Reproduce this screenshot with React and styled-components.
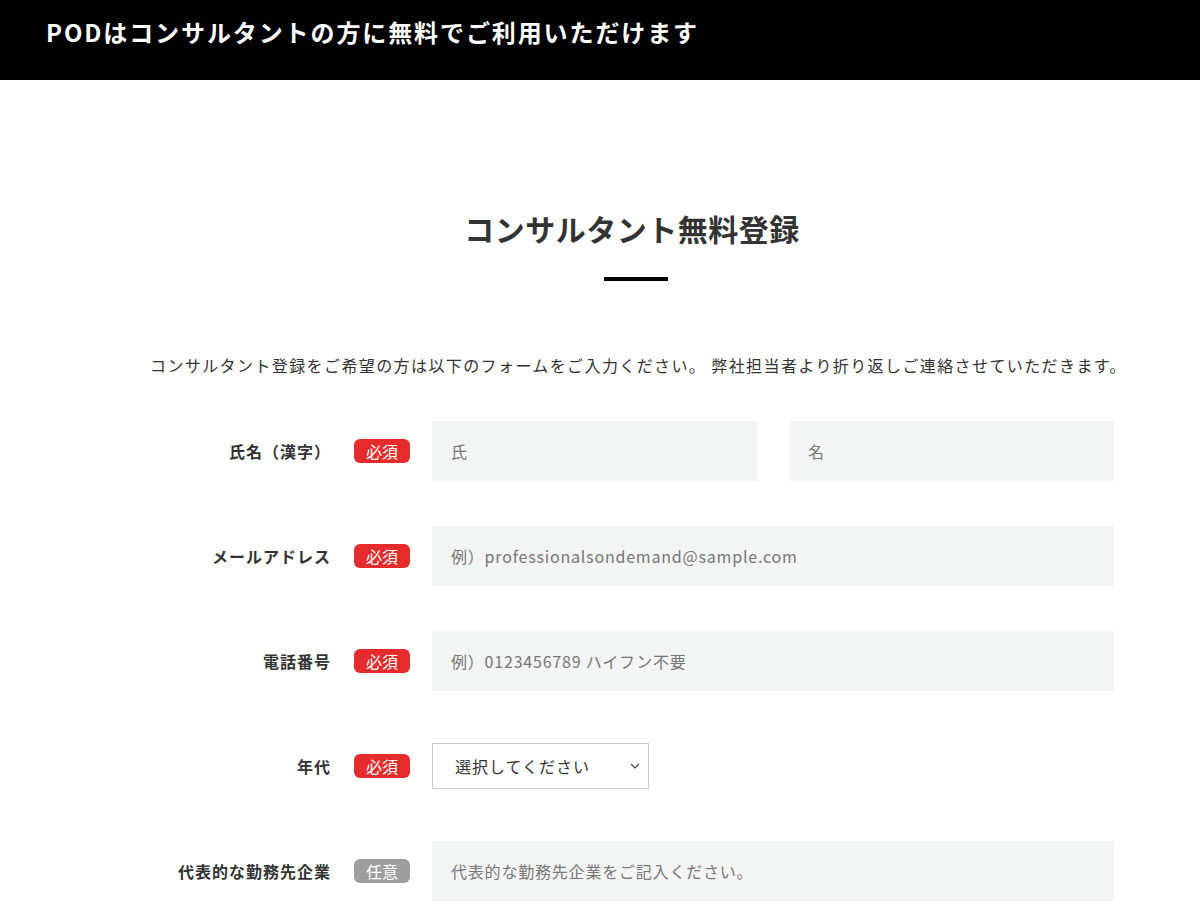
import React from 'react';
import styled, { createGlobalStyle } from 'styled-components';

const GlobalStyle = createGlobalStyle`
  body {
    margin: 0;
    background: #fff;
    font-family: "Noto Sans CJK JP", "Noto Sans", sans-serif;
    color: #333;
  }
`;

const Header = styled.header`
  height: 80px;
  background: #000;
  color: #fff;
  display: flex;
  align-items: center;
  padding: 0 0 18px 46px;
  box-sizing: border-box;
  font-size: 24px;
  font-weight: 700;
  letter-spacing: 1.9px;
`;

const Main = styled.main`
  width: 964px;
  margin: 0 0 0 150px;
  padding-top: 124px;
`;

const Title = styled.h1`
  margin: 0;
  text-align: center;
  font-size: 30px;
  font-weight: 700;
  color: #333;
  line-height: 48px;
  letter-spacing: 0.5px;
`;

const Bar = styled.div`
  width: 64px;
  height: 4px;
  background: #000;
  margin: 25px auto 0 454px;
`;

const Lead = styled.p`
  margin: 64px 0 36px;
  font-size: 16px;
  line-height: 40px;
  text-align: right;
  color: #333;
  letter-spacing: 1.4px;
  white-space: nowrap;
`;

const Row = styled.div`
  display: flex;
  align-items: center;
  height: 60px;
  margin-bottom: 45px;
`;

const Label = styled.label`
  width: 181px;
  text-align: right;
  font-size: 16px;
  font-weight: 700;
  color: #333;
  letter-spacing: 1px;
  white-space: nowrap;
`;

const Badge = styled.span`
  width: 56px;
  height: 24px;
  margin: 0 22px 0 23px;
  border-radius: 6px;
  background: ${({ optional }) => (optional ? '#9e9e9e' : '#e52b2b')};
  color: #fff;
  font-size: 16px;
  display: flex;
  align-items: center;
  justify-content: center;
  flex-shrink: 0;
`;

const Fields = styled.div`
  flex: 1;
  display: flex;
  gap: 32px;
`;

const Input = styled.input`
  flex: 1;
  min-width: 0;
  height: 60px;
  box-sizing: border-box;
  border: none;
  background: #f3f4f4;
  padding: 0 19px;
  font-size: 16px;
  letter-spacing: 0.8px;
  font-family: inherit;
  &::placeholder { color: #777; }
`;

const SelectBox = styled.div`
  width: 217px;
  height: 46px;
  box-sizing: border-box;
  border: 1px solid #ccc;
  display: flex;
  align-items: center;
  justify-content: space-between;
  padding: 0 8px 0 22px;
  font-size: 16px;
  letter-spacing: 1px;
  color: #333;
`;

const rows = [
  { label: 'メールアドレス', ph: '例）professionalsondemand@sample.com' },
  { label: '電話番号', ph: '例）0123456789 ハイフン不要' },
];

export default function App() {
  return (
    <>
      <GlobalStyle />
      <Header>PODはコンサルタントの方に無料でご利用いただけます</Header>
      <Main>
        <Title>コンサルタント無料登録</Title>
        <Bar />
        <Lead>コンサルタント登録をご希望の方は以下のフォームをご入力ください。 弊社担当者より折り返しご連絡させていただきます。</Lead>
        <Row>
          <Label>氏名（漢字）</Label>
          <Badge>必須</Badge>
          <Fields>
            <Input placeholder="氏" />
            <Input placeholder="名" />
          </Fields>
        </Row>
        {rows.map(({ label, ph }) => (
          <Row key={label}>
            <Label>{label}</Label>
            <Badge>必須</Badge>
            <Fields>
              <Input placeholder={ph} />
            </Fields>
          </Row>
        ))}
        <Row>
          <Label>年代</Label>
          <Badge>必須</Badge>
          <SelectBox>
            <span>選択してください</span>
            <svg width="10" height="6" viewBox="0 0 10 6">
              <path d="M1 1l4 4 4-4" fill="none" stroke="#444" strokeWidth="1.2" />
            </svg>
          </SelectBox>
        </Row>
        <Row>
          <Label>代表的な勤務先企業</Label>
          <Badge optional>任意</Badge>
          <Fields>
            <Input placeholder="代表的な勤務先企業をご記入ください。" />
          </Fields>
        </Row>
      </Main>
    </>
  );
}
